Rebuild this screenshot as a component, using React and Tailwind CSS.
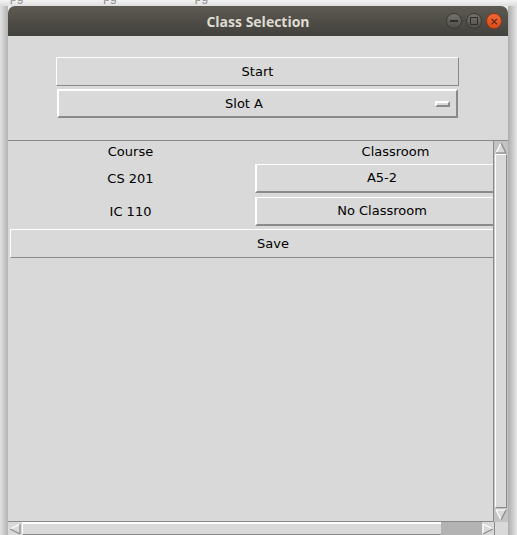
import React from "react";

const ArrowUp = () => (
  <svg width="12" height="12" viewBox="0 0 12 12">
    <polygon points="6,1 1,11 11,11" fill="#d9d9d9" />
    <line x1="6" y1="1" x2="1" y2="11" stroke="#ffffff" strokeWidth="1.2" />
    <line x1="6" y1="1" x2="11" y2="11" stroke="#8a8a8a" strokeWidth="1.2" />
    <line x1="1" y1="11" x2="11" y2="11" stroke="#8a8a8a" strokeWidth="1.2" />
  </svg>
);

const ArrowDown = () => (
  <svg width="12" height="12" viewBox="0 0 12 12">
    <polygon points="1,1 11,1 6,11" fill="#d9d9d9" />
    <line x1="1" y1="1" x2="11" y2="1" stroke="#ffffff" strokeWidth="1.2" />
    <line x1="1" y1="1" x2="6" y2="11" stroke="#ffffff" strokeWidth="1.2" />
    <line x1="11" y1="1" x2="6" y2="11" stroke="#8a8a8a" strokeWidth="1.2" />
  </svg>
);

const ArrowLeft = () => (
  <svg width="12" height="12" viewBox="0 0 12 12">
    <polygon points="1,6 11,1 11,11" fill="#d9d9d9" />
    <line x1="1" y1="6" x2="11" y2="1" stroke="#ffffff" strokeWidth="1.2" />
    <line x1="1" y1="6" x2="11" y2="11" stroke="#8a8a8a" strokeWidth="1.2" />
    <line x1="11" y1="1" x2="11" y2="11" stroke="#8a8a8a" strokeWidth="1.2" />
  </svg>
);

const ArrowRight = () => (
  <svg width="12" height="12" viewBox="0 0 12 12">
    <polygon points="1,1 11,6 1,11" fill="#d9d9d9" />
    <line x1="1" y1="1" x2="11" y2="6" stroke="#ffffff" strokeWidth="1.2" />
    <line x1="1" y1="1" x2="1" y2="11" stroke="#ffffff" strokeWidth="1.2" />
    <line x1="1" y1="11" x2="11" y2="6" stroke="#8a8a8a" strokeWidth="1.2" />
  </svg>
);

const TitleButtons = () => (
  <div className="absolute right-[6px] top-[7px] flex gap-[4px]">
    <div className="w-[16px] h-[16px] rounded-full bg-gradient-to-b from-[#75736c] to-[#4f4d47] border border-[#3a3934] flex items-center justify-center">
      <div className="w-[8px] h-[1.5px] bg-[#2f2e2a]" />
    </div>
    <div className="w-[16px] h-[16px] rounded-full bg-gradient-to-b from-[#75736c] to-[#4f4d47] border border-[#3a3934] flex items-center justify-center">
      <div className="w-[8px] h-[8px] border border-[#2f2e2a]" />
    </div>
    <div className="w-[16px] h-[16px] rounded-full bg-gradient-to-b from-[#f06a38] to-[#df4c18] border border-[#9c3412] flex items-center justify-center text-[#4a1a08] text-[11px] leading-none">
      ×
    </div>
  </div>
);

const rows = [
  { course: "CS 201", room: "A5-2" },
  { course: "IC 110", room: "No Classroom" },
];

export default function App() {
  return (
    <div className="w-[517px] h-[535px] bg-[#ededed] overflow-hidden flex flex-col font-['DejaVu_Sans',sans-serif] text-[13px] text-black">
      <div className="h-[6px] overflow-hidden bg-gradient-to-b from-[#f4f4f4] to-[#dedede]">
        <div className="flex -mt-[12px] text-[12px] text-[#8a8a8a] font-['Liberation_Sans',sans-serif]">
          <span className="ml-[10px]">pg</span>
          <span className="ml-[80px]">pg</span>
          <span className="ml-[78px]">pg</span>
        </div>
      </div>
      <div className="flex flex-1 min-h-0">
        <div className="w-[8px] bg-gradient-to-r from-[#e2e2e2] to-[#b2b2b2]" />
        <div className="w-[500px] flex flex-col">
          <div className="relative h-[30px] rounded-t-[7px] bg-gradient-to-b from-[#5c5a52] to-[#43413c] flex items-center justify-center">
            <span className="font-['Open_Sans',sans-serif] font-bold text-[14px] text-[#dfdbd2]">Class Selection</span>
            <TitleButtons />
          </div>
          <div className="flex-1 min-h-0 bg-[#d9d9d9] flex flex-col">
            <div className="pt-[21px] pb-[22px] flex flex-col">
              <div className="ml-[48px] w-[403px] h-[29px] border border-t-white border-l-white border-b-[#8a8a8a] border-r-[#8a8a8a] flex items-center justify-center">
                Start
              </div>
              <div className="mt-[3px] ml-[49px] w-[401px] h-[29px] border-2 border-t-white border-l-white border-b-[#8a8a8a] border-r-[#8a8a8a] flex items-center">
                <span className="flex-1 text-center">Slot A</span>
                <div className="w-[15px] h-[6px] ml-[6px] mr-[6px] border-2 border-t-white border-l-white border-b-[#8a8a8a] border-r-[#8a8a8a]" />
              </div>
            </div>
            <div className="flex-1 min-h-0 flex">
              <div className="w-[485px] overflow-hidden border-t border-b border-[#8a8a8a] pl-[2px]">
                <div className="w-[526px] grid grid-cols-[245px_281px]">
                  <div className="h-[23px] pr-[4px] flex items-center justify-center pb-[2px]">Course</div>
                  <div className="h-[23px] flex items-center justify-center pb-[2px]">Classroom</div>
                  {rows.map((r, i) => (
                    <React.Fragment key={r.course}>
                      <div className={`h-[29px] pr-[4px] flex items-center justify-center ${i ? "mt-[4px]" : ""}`}>{r.course}</div>
                      <div className={`h-[29px] ${i ? "mt-[4px]" : ""}`}>
                        <div className="w-[254px] h-full border-t border-l-2 border-b-2 border-r-2 border-t-white border-l-white border-b-[#8a8a8a] border-r-[#8a8a8a] flex items-center justify-center">
                          {r.room}
                        </div>
                      </div>
                    </React.Fragment>
                  ))}
                  <div className="col-span-2 mt-[3px] h-[29px] border border-t-white border-l-white border-b-[#8a8a8a] border-r-[#8a8a8a] flex items-center justify-center">
                    Save
                  </div>
                </div>
              </div>
              <div className="w-[15px] flex flex-col border-t border-l border-[#8a8a8a] bg-[#c3c3c3]">
                <div className="h-[13px] flex items-center justify-center"><ArrowUp /></div>
                <div className="flex-1 mx-[1px] border border-t-white border-l-white border-b-[#8a8a8a] border-r-[#8a8a8a] bg-[#d9d9d9]" />
                <div className="h-[14px] flex items-center justify-center"><ArrowDown /></div>
              </div>
            </div>
            <div className="h-[13px] flex">
              <div className="w-[486px] flex bg-[#b3b3b3]">
                <div className="w-[14px] flex items-center justify-center bg-[#d9d9d9]"><ArrowLeft /></div>
                <div className="w-[419px] border-t-2 border-l border-b border-t-white border-l-white border-b-[#8a8a8a] bg-[#d9d9d9]" />
                <div className="flex-1" />
                <div className="w-[12px] flex items-center justify-center bg-[#d9d9d9]"><ArrowRight /></div>
              </div>
              <div className="w-[14px] bg-[#d9d9d9] border-l border-[#8a8a8a]" />
            </div>
          </div>
        </div>
        <div className="w-[9px] bg-gradient-to-r from-[#adadad] to-[#e6e6e6]" />
      </div>
    </div>
  );
}
